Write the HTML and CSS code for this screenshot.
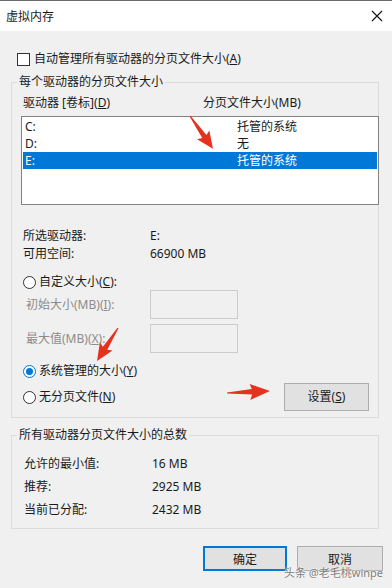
FILE: index.html
```html
<!DOCTYPE html>
<html lang="zh-CN">
<head>
<meta charset="utf-8">
<title>虚拟内存</title>
<link rel="stylesheet" href="styles.css">
</head>
<body>
<div class="window">
  <div class="titlebar">
    <span class="title">虚拟内存</span>
    <svg class="close" width="12" height="12" viewBox="0 0 12 12"><path d="M1 1 L11 11 M11 1 L1 11" stroke="#111" stroke-width="1.1" fill="none"/></svg>
  </div>
  <div class="content">
    <div class="check-row"><span class="checkbox"></span><span>自动管理所有驱动器的分页文件大小(<u>A</u>)</span></div>

    <fieldset class="group g1">
      <legend>每个驱动器的分页文件大小</legend>
      <div class="list-head"><span class="hcol">驱动器 [卷标](<u>D</u>)</span><span>分页文件大小(MB)</span></div>
      <div class="listbox">
        <div class="row"><span class="rcol">C:</span><span>托管的系统</span></div>
        <div class="row"><span class="rcol">D:</span><span>无</span></div>
        <div class="row selected"><span class="rcol">E:</span><span>托管的系统</span></div>
      </div>
      <div class="info">
        <span>所选驱动器:</span><span>E:</span>
        <span>可用空间:</span><span>66900 MB</span>
      </div>
      <div class="radio-row r-custom"><span class="radio"></span><span>自定义大小(<u>C</u>):</span></div>
      <div class="field-row"><span class="flabel">初始大小(MB)(<u>I</u>):</span><span class="input"></span></div>
      <div class="field-row f2"><span class="flabel">最大值(MB)(<u>X</u>):</span><span class="input"></span></div>
      <div class="radio-row r-sys"><span class="radio checked"></span><span>系统管理的大小(<u>Y</u>)</span></div>
      <div class="radio-row r-none"><span class="radio"></span><span>无分页文件(<u>N</u>)</span><span class="btn set">设置(<u>S</u>)</span></div>
    </fieldset>

    <fieldset class="group g2">
      <legend>所有驱动器分页文件大小的总数</legend>
      <div class="totals">
        <span>允许的最小值:</span><span>16 MB</span>
        <span>推荐:</span><span>2925 MB</span>
        <span>当前已分配:</span><span>2432 MB</span>
      </div>
    </fieldset>

    <div class="buttons">
      <span class="btn ok">确定</span>
      <span class="btn cancel">取消</span>
    </div>
  </div>

  <div class="watermark">头条 @老毛桃winpe</div>

  <svg class="arrows" width="392" height="588" viewBox="0 0 392 588">
    <g fill="#e5321e">
      <polygon transform="translate(190 116) rotate(55)" points="0,-0.6 25,-2.6 23,-7.5 40,0 23,7.5 25,2.6 0,0.6"/>
      <polygon transform="translate(118 328) rotate(122.5)" points="0,-0.6 24,-2.6 22,-7.5 39,0 22,7.5 24,2.6 0,0.6"/>
      <polygon transform="translate(227 393) rotate(-2.7)" points="0,-0.6 25,-2.8 23,-8 43,0 23,8 25,2.8 0,0.6"/>
    </g>
  </svg>
</div>
</body>
</html>
```

FILE: styles.css
```css
html, body {
  margin: 0;
  padding: 0;
}
body {
  width: 392px;
  height: 588px;
  overflow: hidden;
  font-family: "Noto Sans", "Noto Sans CJK SC", sans-serif;
  font-size: 12px;
  color: #1a1a1a;
}
u { text-decoration: underline; text-underline-offset: 1px; }

.window {
  position: relative;
  width: 392px;
  height: 588px;
  background: #f0f0f0;
}

.titlebar {
  height: 30px;
  border-top: 1px solid #6a6a6a;
  background: #ffffff;
  display: flex;
  align-items: center;
  justify-content: space-between;
  padding: 0 9px 0 6px;
}
.title { line-height: 16px; margin-top: 1px; }
.close { display: block; }

.content {
  padding: 20px 13px 0 11px;
}

.check-row {
  display: flex;
  align-items: center;
  height: 16px;
  line-height: 16px;
  padding-left: 6px;
}
.checkbox {
  width: 13px;
  height: 13px;
  box-sizing: border-box;
  border: 1px solid #333;
  background: #fff;
  margin-right: 4px;
}

.group {
  margin: 0;
  border: 1px solid #dcdcdc;
  min-width: 0;
}
.group legend {
  padding: 0 2px;
  line-height: 16px;
}
.g1 {
  margin-top: 7px;
  padding: 5px 9px 6px 11px;
}
.g1 legend { margin-left: -6px; }
.g2 {
  margin-top: 9px;
  padding: 9px 9px 7px 12px;
}
.g2 legend { margin-left: -7px; }

.list-head {
  display: flex;
  line-height: 16px;
}
.hcol { width: 180px; }

.listbox {
  margin: 5px 0 0 -2px;
  width: 358px;
  height: 89px;
  box-sizing: border-box;
  border: 1px solid #828282;
  background: #fff;
  padding: 1px;
}
.row {
  display: flex;
  height: 17px;
  line-height: 17px;
  padding-left: 2px;
}
.rcol { width: 212px; }
.row.selected {
  background: #0078d7;
  color: #fff;
}

.info {
  margin-top: 22px;
  display: grid;
  grid-template-columns: 127px 1fr;
  grid-auto-rows: 18px;
  line-height: 18px;
}

.radio-row {
  display: flex;
  align-items: center;
  height: 16px;
  line-height: 16px;
}
.radio {
  width: 13px;
  height: 13px;
  box-sizing: border-box;
  border: 1px solid #333;
  border-radius: 50%;
  background: #fff;
  margin-right: 3px;
  position: relative;
}
.radio.checked {
  border-color: #0078d7;
  display: flex;
  align-items: center;
  justify-content: center;
}
.radio.checked::after {
  content: "";
  width: 7px;
  height: 7px;
  border-radius: 50%;
  background: #0078d7;
}
.r-custom { margin-top: 11px; }
.r-sys { margin-top: 10px; }
.r-none { margin-top: 4px; height: 28px; }

.field-row {
  display: flex;
  align-items: center;
  height: 29px;
}
.field-row.f2 { margin-top: 5px; }
.flabel {
  width: 124px;
  padding-left: 3px;
  color: #8c8c8c;
  line-height: 16px;
}
.input {
  width: 88px;
  height: 29px;
  box-sizing: border-box;
  border: 1px solid #cccccc;
  background: #f0f0f0;
}

.btn {
  display: flex;
  align-items: center;
  justify-content: center;
  box-sizing: border-box;
  background: #e1e1e1;
  border: 1px solid #adadad;
  height: 25px;
}
.btn.set {
  margin-left: auto;
  width: 85px;
  height: 28px;
}

.totals {
  display: grid;
  grid-template-columns: 128px 1fr;
  grid-auto-rows: 23px;
  line-height: 23px;
}

.buttons {
  display: flex;
  justify-content: flex-end;
  gap: 10px;
  margin-top: 17px;
  margin-right: -4px;
}
.btn.ok {
  width: 84px;
  border: 2px solid #0078d7;
}
.btn.cancel { width: 86px; }

.watermark {
  position: absolute;
  right: 9px;
  top: 566px;
  font-size: 11px;
  line-height: 14px;
  color: #7c7c7c;
  text-shadow: 0 0 2px #fff, 0 0 1px #fff;
}

.arrows {
  position: absolute;
  left: 0;
  top: 0;
  pointer-events: none;
}
```
